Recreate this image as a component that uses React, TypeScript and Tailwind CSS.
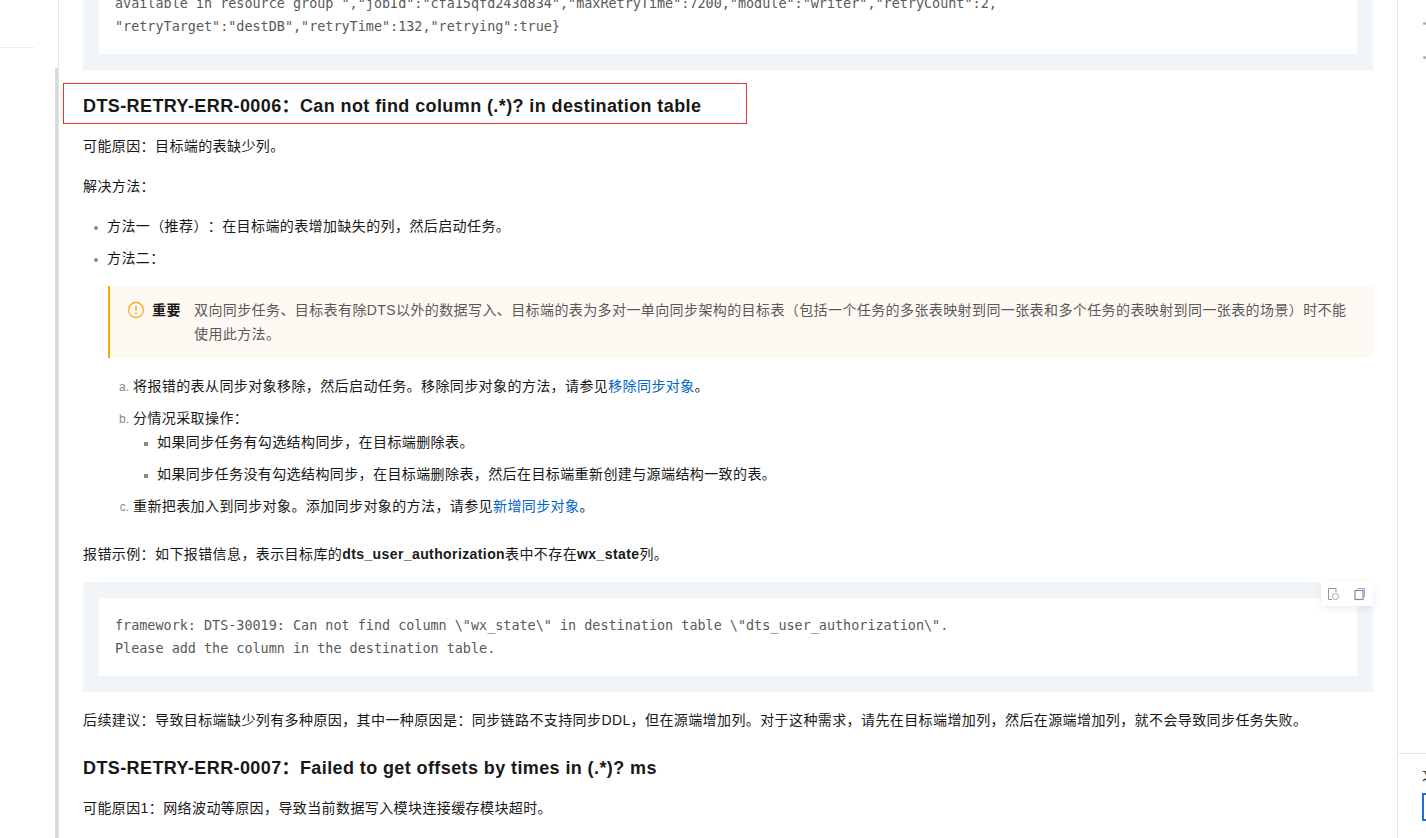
import React from "react";

const sans = "font-['Liberation_Sans','Noto_Sans_CJK_SC',sans-serif]";

function Bullet({children, square = false, className = ""}: {children: React.ReactNode, square?: boolean, className?: string}) {
    return (
        <li className={"flex items-start leading-6 " + className}>
            <span className={(square ? "" : "rounded-full ") + "w-1 h-1 mt-[12px] mr-[9px] ml-[11px] bg-[#8c8c8c] shrink-0"}></span>
            <span>{children}</span>
        </li>
    )
}

function Letter({mark, children, className = ""}: {mark: string, children: React.ReactNode, className?: string}) {
    return (
        <li className={"flex items-start leading-6 " + className}>
            <span className="w-[25px] translate-y-px pr-[4px] shrink-0 text-right text-xs leading-6 tracking-normal text-[#808a99]">{mark}</span>
            <div className="min-w-0">{children}</div>
        </li>
    )
}

function CodeBlock({lines, className = ""}: {lines: string[], className?: string}) {
    return (
        <div className={"bg-[#f2f5f8] p-4 " + className}>
            <pre className="bg-white px-4 pt-4 pb-4 font-['DejaVu_Sans_Mono',monospace] text-[13.45px] leading-[23px] tracking-normal text-[#595959]">
                {lines.join("\n")}
            </pre>
        </div>
    )
}

function PageIcon() {
    return (
        <svg width="14" height="14" viewBox="0 0 14 14" fill="none" stroke="#8f959e" strokeWidth="1">
            <path d="M5 12.5H1.5V1.5H9V5" />
            <circle cx="8.5" cy="9.5" r="3" stroke="#9aa3b5" />
        </svg>
    )
}

function CopyIcon() {
    return (
        <svg width="14" height="14" viewBox="0 0 14 14" fill="none" strokeWidth="1.2">
            <path d="M4 1.5H11.5V10.5" stroke="#8db4e2" />
            <rect x="2" y="3.5" width="8" height="9" stroke="#7f8a99" />
        </svg>
    )
}

export default function App() {
    return (
        <div className={"relative flex h-[838px] overflow-hidden bg-white text-sm tracking-[0.4px] text-[#181818] [text-spacing-trim:space-all] " + sans}>
            <aside className="relative w-[59px] shrink-0 border-r border-[#e5e5e5]">
                <div className="mt-[47px] w-[34px] border-t border-[#ececec]"></div>
                <div className="absolute right-0 top-[68px] bottom-0 w-[3px] bg-[#d9d9d9]"></div>
            </aside>

            <main className="w-[1338px] shrink-0 pl-6 pr-6 -mt-[24px]">
                <CodeBlock
                    className="pt-0"
                    lines={[
                        'available in resource group ","jobId":"cfa15qfd243d834","maxRetryTime":7200,"module":"writer","retryCount":2,',
                        '"retryTarget":"destDB","retryTime":132,"retrying":true}',
                    ]}
                />

                <h2 className="mt-[24px] text-lg leading-6 font-bold">DTS-RETRY-ERR-0006：Can not find column (.*)? in destination table</h2>
                <p className="mt-[16px] leading-6">可能原因：目标端的表缺少列。</p>
                <p className="mt-4 leading-6">解决方法：</p>

                <ul className="mt-4">
                    <Bullet>方法一（推荐）：在目标端的表增加缺失的列，然后启动任务。</Bullet>
                    <Bullet className="mt-2">方法二：</Bullet>
                </ul>

                <div className="relative mt-4 ml-[25px] flex border-l-2 border-[#ffa500] bg-[#fff9f3] pl-[17px] pr-4 py-3 leading-6">
                    <svg className="mt-[3px] shrink-0" width="18" height="18" viewBox="0 0 18 18" fill="none">
                        <circle cx="9" cy="9" r="7.5" stroke="#ffa91f" strokeWidth="1.3" />
                        <path d="M9 4.8V10" stroke="#ffa91f" strokeWidth="1.6" />
                        <circle cx="9" cy="12.6" r="1" fill="#ffa91f" />
                    </svg>
                    <strong className="ml-[7px] w-[42px] shrink-0 font-bold">重要</strong>
                    <span className="text-[#595959]">双向同步任务、目标表有除DTS以外的数据写入、目标端的表为多对一单向同步架构的目标表（包括一个任务的多张表映射到同一张表和多个任务的表映射到同一张表的场景）时不能使用此方法。</span>
                </div>

                <ol className="mt-4 ml-[25px]">
                    <Letter mark="a.">将报错的表从同步对象移除，然后启动任务。移除同步对象的方法，请参见<a className="text-[#0064c8]">移除同步对象</a>。</Letter>
                    <Letter mark="b." className="mt-2">
                        分情况采取操作：
                        <ul>
                            <Bullet square>如果同步任务有勾选结构同步，在目标端删除表。</Bullet>
                            <Bullet square className="mt-2">如果同步任务没有勾选结构同步，在目标端删除表，然后在目标端重新创建与源端结构一致的表。</Bullet>
                        </ul>
                    </Letter>
                    <Letter mark="c." className="mt-2">重新把表加入到同步对象。添加同步对象的方法，请参见<a className="text-[#0064c8]">新增同步对象</a>。</Letter>
                </ol>

                <p className="mt-6 leading-6">报错示例：如下报错信息，表示目标库的<b>dts_user_authorization</b>表中不存在<b>wx_state</b>列。</p>

                <div className="relative mt-4">
                    <CodeBlock
                        lines={[
                            'framework: DTS-30019: Can not find column \\"wx_state\\" in destination table \\"dts_user_authorization\\".',
                            'Please add the column in the destination table.',
                        ]}
                    />
                    <div className="absolute top-0 right-0 flex h-6 w-[52px] items-center justify-around bg-white shadow-[0_2px_8px_rgba(0,0,0,0.08)]">
                        <PageIcon />
                        <CopyIcon />
                    </div>
                </div>

                <p className="mt-4 leading-6">后续建议：导致目标端缺少列有多种原因，其中一种原因是：同步链路不支持同步DDL，但在源端增加列。对于这种需求，请先在目标端增加列，然后在源端增加列，就不会导致同步任务失败。</p>
                <h2 className="mt-[24px] text-lg leading-6 font-bold">DTS-RETRY-ERR-0007：Failed to get offsets by times in (.*)? ms</h2>
                <p className="mt-[16px] leading-6">可能原因1：网络波动等原因，导致当前数据写入模块连接缓存模块超时。</p>
            </main>

            <aside className="flex w-[29px] shrink-0 flex-col border-l border-[#e5e5e5]">
                <div className="flex-1 pl-[25px] pt-[22px]">
                    <div className="h-[3px] w-[3px] rounded-full bg-[#aaa]"></div>
                    <div className="mt-[31px] h-[3px] w-[3px] rounded-full bg-[#aaa]"></div>
                </div>
                <div className="h-[85px] border-t border-[#e8e8e8] pl-[24px] pt-[16px]">
                    <span className="block h-3 overflow-hidden text-xs leading-3">文</span>
                    <div className="mt-[11px] h-7 w-8 border-2 border-[#1c6fe0]"></div>
                </div>
            </aside>

            <div className="absolute left-[63px] top-[83px] h-[41px] w-[684px] border border-[#e53333]"></div>
        </div>
    )
}
